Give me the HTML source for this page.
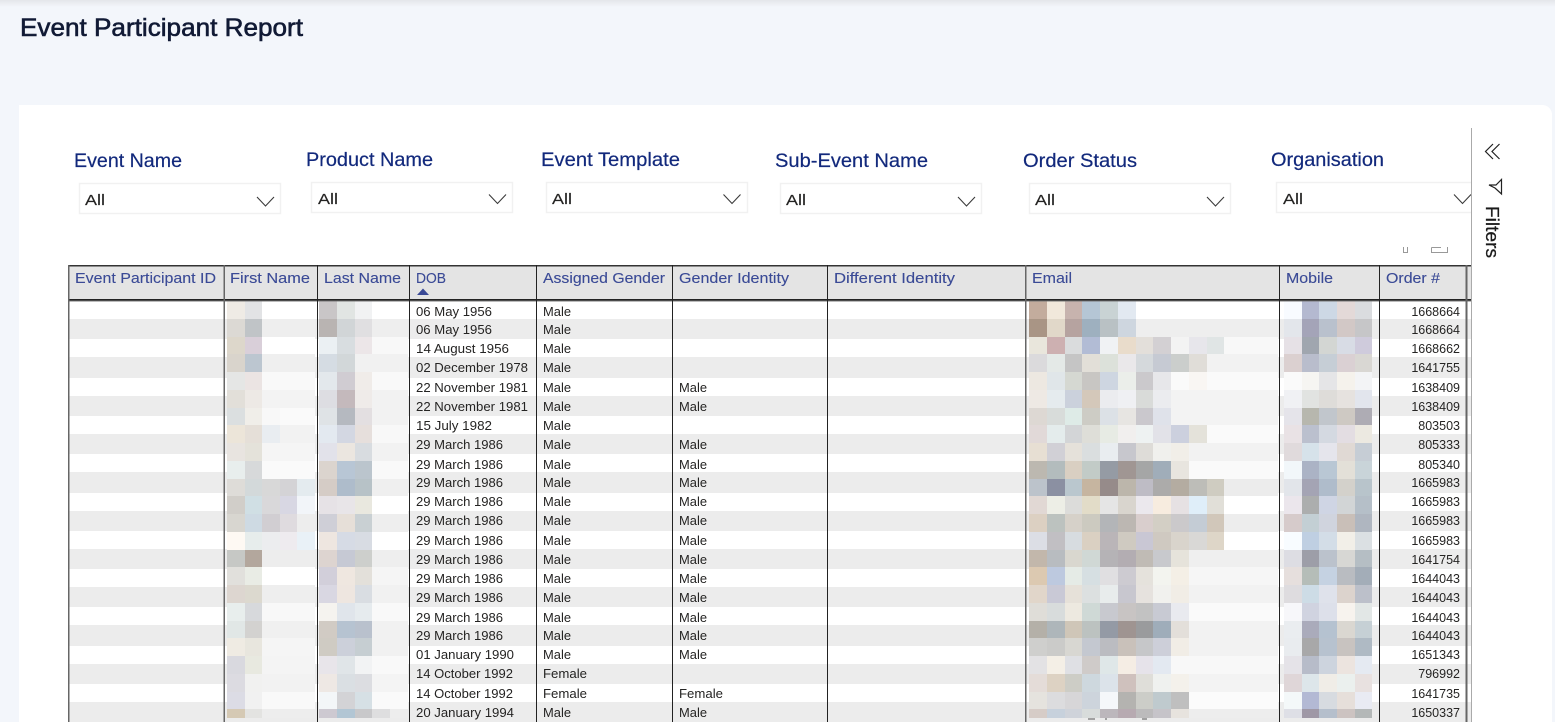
<!DOCTYPE html>
<html><head><meta charset="utf-8"><title>Event Participant Report</title>
<style>
html,body{margin:0;padding:0;width:1555px;height:722px;overflow:hidden;background:#f3f6fb}
svg{position:absolute;left:0;top:0}
text{font-family:"Liberation Sans",sans-serif}
.m{position:absolute;top:301px;height:417px;overflow:hidden;display:grid;grid-auto-rows:17.75px}
.f{left:227px;grid-template-columns:repeat(5,17.6px)}
.l{left:319px;grid-template-columns:repeat(5,17.8px)}
.e{left:1029px;grid-template-columns:repeat(14,17.75px)}
.p{left:1284px;grid-template-columns:repeat(5,17.7px)}
.s3{grid-column:span 3}.s4{grid-column:span 4}.s5{grid-column:span 5}.s6{grid-column:span 6}.s8{grid-column:span 8}
.la{font-size:19.5px;fill:#12297c;stroke:#12297c;stroke-width:.2px}
.al{font-size:15px;fill:#252423;stroke:#252423;stroke-width:.15px}
.h{font-size:15px;fill:#3a4a96;stroke:#3a4a96;stroke-width:.12px}
.d{font-size:12.5px;fill:#252423}
.o{font-size:12.5px;fill:#252423;text-anchor:end}
</style></head><body>
<svg width="1555" height="722" viewBox="0 0 1555 722">
<defs><linearGradient id="t" x1="0" y1="0" x2="0" y2="1"><stop offset="0" stop-color="#e4e6ea"/><stop offset="1" stop-color="#f3f6fb"/></linearGradient></defs>
<rect width="1555" height="722" fill="#f3f6fb"/>
<rect width="1555" height="7" fill="url(#t)"/>
<path d="M19 105H1542a10 10 0 0 1 10 10V722H19Z" fill="#fff"/>
<g fill="#ececec">
<rect x="69" y="319" width="1402" height="20"/><rect x="69" y="357" width="1402" height="21"/><rect x="69" y="396" width="1402" height="20"/><rect x="69" y="434" width="1402" height="20"/><rect x="69" y="472" width="1402" height="21"/><rect x="69" y="511" width="1402" height="20"/><rect x="69" y="549" width="1402" height="20"/><rect x="69" y="587" width="1402" height="20"/><rect x="69" y="625" width="1402" height="21"/><rect x="69" y="664" width="1402" height="20"/><rect x="69" y="702" width="1402" height="20"/>
</g>
</svg>
<div class="m f">
<i style=background:#efebe5></i><i style=background:#e2e3e5></i><i style=background:#fff></i><i style=background:#fff></i><i style=background:#fff></i>
<i style=background:#dcd9d4></i><i style=background:#c0c4c7></i><i style=background:#eee></i><i style=background:#eee></i><i style=background:#eee></i>
<i style=background:#ddd7cb></i><i style=background:#d9cfd9></i><i style=background:#fff></i><i style=background:#fff></i><i style=background:#fff></i>
<i style=background:#d9d4cc></i><i style=background:#bcc6d0></i><i style=background:#efefef></i><i style=background:#efefef></i><i style=background:#efefef></i>
<i style=background:#e5e6e5></i><i style=background:#ebe4e3></i><i style=background:#f9f9f9></i><i style=background:#f9f9f9></i><i style=background:#f9f9f9></i>
<i style=background:#e2dfd9></i><i style=background:#ede9e5></i><i style=background:#f3f3f3></i><i style=background:#f3f3f3></i><i style=background:#f3f3f3></i>
<i style=background:#dbdfe0></i><i style=background:#f0eee9></i><i style=background:#f8f8f8></i><i style=background:#fafafa></i><i style=background:#fafafa></i>
<i style=background:#ece5d9></i><i style=background:#e5dfd8></i><i style=background:#e9edf1></i><i style=background:#f2f2f2></i><i style=background:#f2f2f2></i>
<i style=background:#e8e4e0></i><i style=background:#e4e2da></i><i style=background:#f5f5f5></i><i style=background:#f5f5f5></i><i style=background:#f5f5f5></i>
<i style=background:#e8eeed></i><i style=background:#d7d9da></i><i style=background:#fafafa></i><i style=background:#fafafa></i><i style=background:#fafafa></i>
<i style=background:#dedcd8></i><i style=background:#d3d9da></i><i style=background:#d8d8d8></i><i style=background:#d4d3d6></i><i style=background:#e4ebef></i>
<i style=background:#d1cec9></i><i style=background:#d0dfe4></i><i style=background:#d9d8da></i><i style=background:#d8d7e3></i><i style=background:#f2f5f9></i>
<i style=background:#d8d6d0></i><i style=background:#cedae3></i><i style=background:#d1ced2></i><i style=background:#dfdbdf></i><i style=background:#ededed></i>
<i style=background:#fef9f3></i><i style=background:#e7edec></i><i style=background:#ecedef></i><i style=background:#eeebef></i><i style=background:#e9f1f7></i>
<i style=background:#c6c8c5></i><i style=background:#b3a79d></i><i style=background:#ededed></i><i style=background:#ededed></i><i style=background:#ededed></i>
<i style=background:#e1e0dc></i><i style=background:#e9ece5></i><i style=background:#fff></i><i style=background:#fff></i><i style=background:#fff></i>
<i style=background:#ddd6d0></i><i style=background:#dcd9cf></i><i style=background:#eee></i><i style=background:#eee></i><i style=background:#eee></i>
<i style=background:#e8eeed></i><i style=background:#d7d9dc></i><i style=background:#f8f8f8></i><i style=background:#f8f8f8></i><i style=background:#f8f8f8></i>
<i style=background:#e1e7e6></i><i style=background:#d3d2d0></i><i style=background:#f0f0f0></i><i style=background:#f0f0f0></i><i style=background:#f0f0f0></i>
<i style=background:#efebe3></i><i style=background:#e8e6de></i><i style=background:#f5f5f5></i><i style=background:#f5f5f5></i><i style=background:#f5f5f5></i>
<i style=background:#d9d9df></i><i style=background:#e8e9e0></i><i style=background:#f4f4f4></i><i style=background:#f4f4f4></i><i style=background:#f4f4f4></i>
<i style=background:#dcdbe1></i><i style=background:#f1f1f0></i><i style=background:#f2f2f2></i><i style=background:#f2f2f2></i><i style=background:#f2f2f2></i>
<i style=background:#dcdce5></i><i style=background:#f1f1f1></i><i style=background:#f9f9f9></i><i style=background:#f9f9f9></i><i style=background:#f9f9f9></i>
<i style=background:#d5c9b4></i><i style=background:#e3e3e1></i><i style=background:#ededed></i><i style=background:#ededed></i><i style=background:#ededed></i>
</div>
<div class="m l">
<i style=background:#c9c6c7></i><i style=background:#e1e5e3></i><i style=background:#f1f2f3></i><i style=background:#fff></i><i style=background:#fff></i>
<i style=background:#b9b4b2></i><i style=background:#d1d5d7></i><i style=background:#e0dfe1></i><i style=background:#eee></i><i style=background:#eee></i>
<i style=background:#ebf0f3></i><i style=background:#d8dde0></i><i style=background:#ece6e8></i><i style=background:#f8f8f8></i><i style=background:#f8f8f8></i>
<i style=background:#d5dce3></i><i style=background:#d2d7d9></i><i style=background:#f1f1f1></i><i style=background:#f1f1f1></i><i style=background:#f1f1f1></i>
<i style=background:#e3e8ec></i><i style=background:#d0ccd2></i><i style=background:#f0ece9></i><i style=background:#f9f9f9></i><i style=background:#f9f9f9></i>
<i style=background:#dddde2></i><i style=background:#c4b9bc></i><i style=background:#efebe9></i><i style=background:#f2f2f2></i><i style=background:#f2f2f2></i>
<i style=background:#dfe3e6></i><i style=background:#b5b9c0></i><i style=background:#e3dfe1></i><i style=background:#f2f2f2></i><i style=background:#f2f2f2></i>
<i style=background:#e3e9f0></i><i style=background:#d3d7e2></i><i style=background:#e6dfdc></i><i style=background:#f8f8f8></i><i style=background:#f8f8f8></i>
<i style=background:#e2e2ea></i><i style=background:#ebe6e0></i><i style=background:#d8dce0></i><i style=background:#f2f2f2></i><i style=background:#f2f2f2></i>
<i style=background:#dbd4ce></i><i style=background:#b8c6d5></i><i style=background:#bbc5cd></i><i style=background:#f9f9f9></i><i style=background:#f9f9f9></i>
<i style=background:#d5ccc6></i><i style=background:#aebccb></i><i style=background:#b7c2c7></i><i style=background:#efefef></i><i style=background:#efefef></i>
<i style=background:#e6e2e6></i><i style=background:#e8e5e8></i><i style=background:#e9e8df></i><i style=background:#fff></i><i style=background:#fff></i>
<i style=background:#cfcfd7></i><i style=background:#e6dfd8></i><i style=background:#c9d0d3></i><i style=background:#eee></i><i style=background:#eee></i>
<i style=background:#eee6e0></i><i style=background:#d6dbe5></i><i style=background:#d8dce3></i><i style=background:#fff></i><i style=background:#fff></i>
<i style=background:#ddd4d0></i><i style=background:#c6c9d4></i><i style=background:#cdcfcc></i><i style=background:#eee></i><i style=background:#eee></i>
<i style=background:#d2cfda></i><i style=background:#efe7e0></i><i style=background:#e3e0da></i><i style=background:#f5f5f5></i><i style=background:#f5f5f5></i>
<i style=background:#d9d7e2></i><i style=background:#eee6e0></i><i style=background:#d9dde2></i><i style=background:#f1f1f1></i><i style=background:#f1f1f1></i>
<i style=background:#f5f3ef></i><i style=background:#e0e5eb></i><i style=background:#e6ebee></i><i style=background:#f9f9f9></i><i style=background:#f9f9f9></i>
<i style=background:#d1cbc4></i><i style=background:#b6c3d1></i><i style=background:#b9c1cd></i><i style=background:#f1f1f1></i><i style=background:#f1f1f1></i>
<i style=background:#cfcbc3></i><i style=background:#ccd0da></i><i style=background:#c6ced2></i><i style=background:#f1f1f1></i><i style=background:#f1f1f1></i>
<i style=background:#e8e5ea></i><i style=background:#e0e5e8></i><i style=background:#f2f3f4></i><i style=background:#f9f9f9></i><i style=background:#f9f9f9></i>
<i style=background:#eee8e4></i><i style=background:#dadfe3></i><i style=background:#dcdde1></i><i style=background:#f4f4f4></i><i style=background:#f4f4f4></i>
<i style=background:#f3f6f8></i><i style=background:#d3d3d6></i><i style=background:#d6e0e5></i><i style=background:#fafafa></i><i style=background:#fafafa></i>
<i style=background:#cdc9d1></i><i style=background:#b2c6d4></i><i style=background:#c8c8ca></i><i style=background:#dededf></i><i style=background:#ededed></i>
</div>
<div class="m e">
<i style=background:#c3ac9d></i><i style=background:#f1e8db></i><i style=background:#c7b3ae></i><i style=background:#b5c6d5></i><i style=background:#c9d3d4></i><i style=background:#e2e9f1></i><i class=s8 style=background:#fff></i>
<i style=background:#a99585></i><i style=background:#e1d8c9></i><i style=background:#b6a3a0></i><i style=background:#9eb0bf></i><i style=background:#b9c1c4></i><i style=background:#ced6df></i><i class=s8 style=background:#eee></i>
<i style=background:#e9e6dc></i><i style=background:#cdb0b1></i><i style=background:#dadcdd></i><i style=background:#b2bcd5></i><i style=background:#f0f2f4></i><i style=background:#e9dccb></i><i style=background:#e3dfda></i><i style=background:#d3d0d3></i><i style=background:#f3f3f3></i><i style=background:#e7e6eb></i><i style=background:#e0e5e5></i><i class=s3 style=background:#f8f8f8></i>
<i style=background:#dbdadc></i><i style=background:#e4e9e7></i><i style=background:#c5c5c5></i><i style=background:#e2dfd8></i><i style=background:#dce1da></i><i style=background:#eae8ea></i><i style=background:#d5d9dc></i><i style=background:#c6cad3></i><i style=background:#cbcecc></i><i style=background:#e0ddd8></i><i class=s4 style=background:#f2f2f2></i>
<i style=background:#ede8e1></i><i style=background:#e0e6e9></i><i style=background:#d5d8d2></i><i style=background:#c8c6c3></i><i style=background:#ced6e1></i><i style=background:#ebeeea></i><i style=background:#cbc9cc></i><i style=background:#e7e7ea></i><i style=background:#fafafa></i><i style=background:#f9f6f3></i><i class=s4 style=background:#fafafa></i>
<i style=background:#eee9e4></i><i style=background:#e5ebee></i><i style=background:#cbd1dc></i><i style=background:#d4c8ba></i><i style=background:#ebecef></i><i style=background:#eff0f3></i><i style=background:#d9dbd9></i><i style=background:#ebecef></i><i class=s6 style=background:#f3f3f3></i>
<i style=background:#ddd8d3></i><i style=background:#d8dcda></i><i style=background:#deebe7></i><i style=background:#cdccc5></i><i style=background:#dce1e6></i><i style=background:#e7e5e2></i><i style=background:#cac8cd></i><i style=background:#dfe2ea></i><i class=s6 style=background:#f3f3f3></i>
<i style=background:#e1d9d8></i><i style=background:#e4ecec></i><i style=background:#d3d5d7></i><i style=background:#deded8></i><i style=background:#e7ebe4></i><i style=background:#f1efee></i><i style=background:#eef2f2></i><i style=background:#e2e2e8></i><i style=background:#ccd0de></i><i style=background:#e4e2da></i><i class=s4 style=background:#fafafa></i>
<i style=background:#e7dfd3></i><i style=background:#d1d0d6></i><i style=background:#e5e1da></i><i style=background:#dadedf></i><i style=background:#e9edf0></i><i style=background:#c7c7cd></i><i style=background:#dedcd8></i><i style=background:#f0f0ed></i><i style=background:#f1eee8></i><i class=s5 style=background:#f2f2f2></i>
<i style=background:#bcb8b0></i><i style=background:#b3bcbd></i><i style=background:#d9cfc2></i><i style=background:#c2cbc7></i><i style=background:#959ba4></i><i style=background:#a09693></i><i style=background:#a5a6a6></i><i style=background:#a0adb9></i><i style=background:#e8e5df></i><i class=s5 style=background:#fafafa></i>
<i style=background:#bcc3cb></i><i style=background:#8b90a2></i><i style=background:#bac7ce></i><i style=background:#c6b5a0></i><i style=background:#968b8a></i><i style=background:#bcb6ab></i><i style=background:#bebcc5></i><i style=background:#acabaa></i><i style=background:#b4aca1></i><i style=background:#bdbdb8></i><i style=background:#cfccc1></i><i class=s3 style=background:#ececec></i>
<i style=background:#e1d8d4></i><i style=background:#edeee6></i><i style=background:#dcdcda></i><i style=background:#e2dcc8></i><i style=background:#e5e5e5></i><i style=background:#d9d5ce></i><i style=background:#ebe8ed></i><i style=background:#f7ecdf></i><i style=background:#e6e1e3></i><i style=background:#dfeef9></i><i style=background:#e1dfd8></i><i class=s3 style=background:#fff></i>
<i style=background:#dcd0c2></i><i style=background:#bcc2bf></i><i style=background:#d6d1c9></i><i style=background:#cccac0></i><i style=background:#b3b5b8></i><i style=background:#bcb7b2></i><i style=background:#d9cecd></i><i style=background:#d3cfc5></i><i style=background:#cbc9cb></i><i style=background:#c4ccd5></i><i style=background:#d1c7ba></i><i class=s3 style=background:#ededed></i>
<i style=background:#dcdee5></i><i style=background:#c1bfc3></i><i style=background:#d7dce0></i><i style=background:#dad0c2></i><i style=background:#bab5b8></i><i style=background:#cfcac1></i><i style=background:#c9c7d4></i><i style=background:#cfc9c1></i><i style=background:#d9d4cc></i><i style=background:#d9d8d6></i><i style=background:#ded6c8></i><i class=s3 style=background:#fff></i>
<i style=background:#c2b7ab></i><i style=background:#b8bcc0></i><i style=background:#d9d7cf></i><i style=background:#d0d8d5></i><i style=background:#b5b3b6></i><i style=background:#b3adb2></i><i style=background:#c0bbb5></i><i style=background:#c8c9cd></i><i style=background:#e6e3db></i><i class=s5 style=background:#efefef></i>
<i style=background:#dcc9b1></i><i style=background:#bdc9df></i><i style=background:#e5ebe6></i><i style=background:#d6dfe2></i><i style=background:#e0dfe1></i><i style=background:#cdcbd1></i><i style=background:#e5e2dc></i><i style=background:#f3f4ef></i><i style=background:#f4efe6></i><i class=s5 style=background:#f6f6f6></i>
<i style=background:#e1d6ca></i><i style=background:#c9c9d6></i><i style=background:#e6e1d9></i><i style=background:#dce0e0></i><i style=background:#e8ecec></i><i style=background:#c8c7cf></i><i style=background:#e6e2de></i><i style=background:#f1f1ee></i><i style=background:#f1ede6></i><i class=s5 style=background:#f2f2f2></i>
<i style=background:#dfddd8></i><i style=background:#d8dcdc></i><i style=background:#ede9e0></i><i style=background:#cfd9d6></i><i style=background:#c8c9cf></i><i style=background:#c8c4c3></i><i style=background:#c2c2c2></i><i style=background:#c8cad3></i><i style=background:#e9eaef></i><i class=s5 style=background:#fafafa></i>
<i style=background:#b4b0a8></i><i style=background:#aeb6ba></i><i style=background:#cfc6b8></i><i style=background:#bcc2c0></i><i style=background:#949aa5></i><i style=background:#9f9491></i><i style=background:#9a9b9d></i><i style=background:#9fadba></i><i style=background:#e3dfda></i><i class=s5 style=background:#f2f2f2></i>
<i style=background:#cfcfcd></i><i style=background:#cbcbc9></i><i style=background:#d8d7d2></i><i style=background:#c4c8d0></i><i style=background:#bbbcc1></i><i style=background:#c9c1ba></i><i style=background:#c6c7c9></i><i style=background:#cdcfd9></i><i style=background:#f1ede6></i><i class=s5 style=background:#f2f2f2></i>
<i style=background:#e3e2e4></i><i style=background:#f4efe6></i><i style=background:#dfe0e4></i><i style=background:#cfcbc9></i><i style=background:#dfe7e8></i><i style=background:#f5ede4></i><i style=background:#e6e3ea></i><i style=background:#e3e9f1></i><i class=s6 style=background:#f8f8f8></i>
<i style=background:#e4dcd8></i><i style=background:#ddd2c3></i><i style=background:#cdcdc6></i><i style=background:#ced8de></i><i style=background:#dce3ea></i><i style=background:#cfc1bd></i><i style=background:#dfded9></i><i style=background:#eff1ef></i><i style=background:#f4f1eb></i><i class=s5 style=background:#f3f3f3></i>
<i style=background:#e5e3de></i><i style=background:#dcdcde></i><i style=background:#d7d6d8></i><i style=background:#cdd4dc></i><i style=background:#f5f7fa></i><i style=background:#b4b3b0></i><i style=background:#cccdc8></i><i style=background:#bfcace></i><i style=background:#bfbfbf></i><i class=s5 style=background:#fbfbfb></i>
<i style=background:#d6ccc7></i><i style=background:#c7d1dc></i><i style=background:#cfd3da></i><i style=background:#d8dcdb></i><i style=background:#bcb7bc></i><i style=background:#b7aab1></i><i style=background:#bcbbbc></i><i style=background:#c6c4c9></i><i style=background:#e7e3de></i><i class=s5 style=background:#ededed></i>
</div>
<div class="m p">
<i style=background:#f8fbff></i><i style=background:#b4b9d0></i><i style=background:#cdd8e5></i><i style=background:#e3d9d8></i><i style=background:#dadcdf></i>
<i style=background:#e3e6eb></i><i style=background:#a4a4b8></i><i style=background:#b9c1cd></i><i style=background:#d2c8c6></i><i style=background:#c6c6c8></i>
<i style=background:#e6e1e6></i><i style=background:#a0a6af></i><i style=background:#d3d6d3></i><i style=background:#d8dce5></i><i style=background:#cfcbdc></i>
<i style=background:#dbd0d0></i><i style=background:#b9bdcc></i><i style=background:#c6ced6></i><i style=background:#dad0d3></i><i style=background:#d9d7d3></i>
<i style=background:#fafafa></i><i style=background:#f6f5f2></i><i style=background:#e5e5e7></i><i style=background:#f5f2ec></i><i style=background:#f3f4f6></i>
<i style=background:#f0f1f4></i><i style=background:#e1e3e1></i><i style=background:#dedcd9></i><i style=background:#e6e2df></i><i style=background:#e2e5ed></i>
<i style=background:#e5e4ea></i><i style=background:#b7b7ae></i><i style=background:#c1c6cc></i><i style=background:#cec9c3></i><i style=background:#aeacb4></i>
<i style=background:#e9e2e5></i><i style=background:#bbc0ce></i><i style=background:#d4d9e1></i><i style=background:#e3dde2></i><i style=background:#ece9e1></i>
<i style=background:#e0dadc></i><i style=background:#d6e2ea></i><i style=background:#e5e5ec></i><i style=background:#e0d9d4></i><i style=background:#c6cdd5></i>
<i style=background:#f2f7fa></i><i style=background:#abb3c5></i><i style=background:#b9c7d4></i><i style=background:#e3e0d8></i><i style=background:#c9d4d9></i>
<i style=background:#e2e5ea></i><i style=background:#a4a4b4></i><i style=background:#afbccb></i><i style=background:#d3d1cb></i><i style=background:#b8c4cb></i>
<i style=background:#ebe6ec></i><i style=background:#acaeae></i><i style=background:#cfd5e4></i><i style=background:#d2d5d6></i><i style=background:#b5bfc8></i>
<i style=background:#d6cbcb></i><i style=background:#c3cfd4></i><i style=background:#d0d4de></i><i style=background:#c9bfb8></i><i style=background:#afb6c0></i>
<i style=background:#f8fcff></i><i style=background:#bfcfe2></i><i style=background:#d3dde7></i><i style=background:#f2efe8></i><i style=background:#dbe0e3></i>
<i style=background:#dddde3></i><i style=background:#9d9ea8></i><i style=background:#bbc2cc></i><i style=background:#d7d7d4></i><i style=background:#b5bec4></i>
<i style=background:#e6dfdd></i><i style=background:#b5bdb8></i><i style=background:#c5d2e2></i><i style=background:#b9bcc1></i><i style=background:#a3adb8></i>
<i style=background:#dedcdf></i><i style=background:#cddce6></i><i style=background:#dfe2eb></i><i style=background:#dcd3cd></i><i style=background:#bcc0ca></i>
<i style=background:#f7f7fa></i><i style=background:#d0d3e0></i><i style=background:#dde0ea></i><i style=background:#f7f3ee></i><i style=background:#e2e7e6></i>
<i style=background:#eaedf0></i><i style=background:#aaabbb></i><i style=background:#b5c2d0></i><i style=background:#dad7d1></i><i style=background:#c6d0d5></i>
<i style=background:#e9ecef></i><i style=background:#a8a8a9></i><i style=background:#b7c2cf></i><i style=background:#c8c3c0></i><i style=background:#afbac4></i>
<i style=background:#e5e3e8></i><i style=background:#b7bcc9></i><i style=background:#cdd4de></i><i style=background:#ece4df></i><i style=background:#e5eaf2></i>
<i style=background:#dfd6d8></i><i style=background:#dde6ea></i><i style=background:#f0ede7></i><i style=background:#ebf0ee></i><i style=background:#e8e1e0></i>
<i style=background:#f4f8f9></i><i style=background:#b3b9d4></i><i style=background:#d7dbe0></i><i style=background:#e6dfda></i><i style=background:#e9ebf3></i>
<i style=background:#dedfe6></i><i style=background:#9f98a6></i><i style=background:#b5bfcc></i><i style=background:#ccc3c1></i><i style=background:#b4b8b8></i>
</div>
<svg width="1555" height="722" viewBox="0 0 1555 722">
<text x="20" y="36" font-size="25" fill="#111a35" stroke="#111a35" stroke-width=".6" textLength="283" lengthAdjust="spacingAndGlyphs">Event Participant Report</text>
<g class="labels">
<text class="la" x="74" y="167" textLength="108" lengthAdjust="spacingAndGlyphs">Event Name</text>
<text class="la" x="306" y="166" textLength="127" lengthAdjust="spacingAndGlyphs">Product Name</text>
<text class="la" x="541" y="166" textLength="139" lengthAdjust="spacingAndGlyphs">Event Template</text>
<text class="la" x="775" y="167" textLength="153" lengthAdjust="spacingAndGlyphs">Sub-Event Name</text>
<text class="la" x="1023" y="167" textLength="114" lengthAdjust="spacingAndGlyphs">Order Status</text>
<text class="la" x="1271" y="166" textLength="113" lengthAdjust="spacingAndGlyphs">Organisation</text>
</g>
<g fill="#fff" stroke="#f1f1f1" stroke-width="1.5">
<rect x="79.5" y="183.5" width="201" height="30"/><rect x="311.5" y="182.5" width="201" height="30"/><rect x="546.5" y="182.5" width="201" height="30"/><rect x="780.5" y="183.5" width="201" height="30"/><rect x="1029.5" y="183.5" width="201" height="30"/><rect x="1276.5" y="182.5" width="201" height="30"/>
</g>
<text class="al" x="85" y="205" textLength="20" lengthAdjust="spacingAndGlyphs">All</text>
<text class="al" x="318" y="204" textLength="20" lengthAdjust="spacingAndGlyphs">All</text>
<text class="al" x="552" y="204" textLength="20" lengthAdjust="spacingAndGlyphs">All</text>
<text class="al" x="786" y="205" textLength="20" lengthAdjust="spacingAndGlyphs">All</text>
<text class="al" x="1035" y="205" textLength="20" lengthAdjust="spacingAndGlyphs">All</text>
<text class="al" x="1283" y="204" textLength="20" lengthAdjust="spacingAndGlyphs">All</text>
<g fill="none" stroke="#3a3a3a" stroke-width="1.1">
<path d="M257 197l8.5 9 8.5-9"/><path d="M489 194.5l8.5 9 8.5-9"/><path d="M723.5 194.5l8.5 9 8.5-9"/><path d="M958 197l8.5 9 8.5-9"/><path d="M1207 197l8.5 9 8.5-9"/><path d="M1454 194.5l8.5 9 8.5-9"/>
</g>
<path d="M1403.5 247V252.5H1407.5V247M1431.5 247.5H1441M1431.5 247.5V252.5H1447.5V247" fill="none" stroke="#999" stroke-width="1"/>
<rect x="69" y="266" width="1402" height="34" fill="#e4e4e4"/>
<rect x="68" y="265" width="1403" height="1.5" fill="#333"/>
<rect x="68" y="299" width="1403" height="1.5" fill="#222"/>
<rect x="68" y="300.5" width="1403" height="1" fill="#777"/>
<path d="M417 295L423 288.5 429 295Z" fill="#3a4a96"/>
<text class="h" x="75" y="283" textLength="141" lengthAdjust="spacingAndGlyphs">Event Participant ID</text>
<text class="h" x="230" y="283" textLength="80" lengthAdjust="spacingAndGlyphs">First Name</text>
<text class="h" x="324" y="283" textLength="77" lengthAdjust="spacingAndGlyphs">Last Name</text>
<text class="h" x="416" y="283" textLength="30" lengthAdjust="spacingAndGlyphs">DOB</text>
<text class="h" x="543" y="283" textLength="122" lengthAdjust="spacingAndGlyphs">Assigned Gender</text>
<text class="h" x="679" y="283" textLength="110" lengthAdjust="spacingAndGlyphs">Gender Identity</text>
<text class="h" x="834" y="283" textLength="121" lengthAdjust="spacingAndGlyphs">Different Identity</text>
<text class="h" x="1032" y="283" textLength="40" lengthAdjust="spacingAndGlyphs">Email</text>
<text class="h" x="1286" y="283" textLength="47" lengthAdjust="spacingAndGlyphs">Mobile</text>
<text class="h" x="1386" y="283" textLength="54" lengthAdjust="spacingAndGlyphs">Order #</text>
<g fill="#222">
<rect x="317" y="265" width="1" height="457"/><rect x="409" y="265" width="1" height="457"/><rect x="536" y="265" width="1" height="457"/><rect x="672" y="265" width="1" height="457"/><rect x="827" y="265" width="1" height="457"/><rect x="1279" y="265" width="1" height="457"/><rect x="1379" y="265" width="1" height="457"/>
</g>
<g fill="#666">
<rect x="68" y="265" width="1.5" height="457"/><rect x="223.5" y="265" width="1.5" height="457"/><rect x="1025" y="265" width="1.5" height="457"/><rect x="1465.5" y="265" width="2" height="457"/>
</g>
<g class="d">
<text x="416" y="316" textLength="76" lengthAdjust="spacingAndGlyphs">06 May 1956</text>
<text x="416" y="334" textLength="76" lengthAdjust="spacingAndGlyphs">06 May 1956</text>
<text x="416" y="353" textLength="93" lengthAdjust="spacingAndGlyphs">14 August 1956</text>
<text x="416" y="372" textLength="112" lengthAdjust="spacingAndGlyphs">02 December 1978</text>
<text x="416" y="392" textLength="112" lengthAdjust="spacingAndGlyphs">22 November 1981</text>
<text x="416" y="411" textLength="112" lengthAdjust="spacingAndGlyphs">22 November 1981</text>
<text x="416" y="430" textLength="76" lengthAdjust="spacingAndGlyphs">15 July 1982</text>
<text x="416" y="449" textLength="87" lengthAdjust="spacingAndGlyphs">29 March 1986</text>
<text x="416" y="469" textLength="87" lengthAdjust="spacingAndGlyphs">29 March 1986</text>
<text x="416" y="487" textLength="87" lengthAdjust="spacingAndGlyphs">29 March 1986</text>
<text x="416" y="506" textLength="87" lengthAdjust="spacingAndGlyphs">29 March 1986</text>
<text x="416" y="525" textLength="87" lengthAdjust="spacingAndGlyphs">29 March 1986</text>
<text x="416" y="545" textLength="87" lengthAdjust="spacingAndGlyphs">29 March 1986</text>
<text x="416" y="564" textLength="87" lengthAdjust="spacingAndGlyphs">29 March 1986</text>
<text x="416" y="583" textLength="87" lengthAdjust="spacingAndGlyphs">29 March 1986</text>
<text x="416" y="602" textLength="87" lengthAdjust="spacingAndGlyphs">29 March 1986</text>
<text x="416" y="622" textLength="87" lengthAdjust="spacingAndGlyphs">29 March 1986</text>
<text x="416" y="640" textLength="87" lengthAdjust="spacingAndGlyphs">29 March 1986</text>
<text x="416" y="659" textLength="98" lengthAdjust="spacingAndGlyphs">01 January 1990</text>
<text x="416" y="678" textLength="97" lengthAdjust="spacingAndGlyphs">14 October 1992</text>
<text x="416" y="698" textLength="97" lengthAdjust="spacingAndGlyphs">14 October 1992</text>
<text x="416" y="717" textLength="98" lengthAdjust="spacingAndGlyphs">20 January 1994</text>
<text x="543" y="316" textLength="28" lengthAdjust="spacingAndGlyphs">Male</text>
<text x="543" y="334" textLength="28" lengthAdjust="spacingAndGlyphs">Male</text>
<text x="543" y="353" textLength="28" lengthAdjust="spacingAndGlyphs">Male</text>
<text x="543" y="372" textLength="28" lengthAdjust="spacingAndGlyphs">Male</text>
<text x="543" y="392" textLength="28" lengthAdjust="spacingAndGlyphs">Male</text>
<text x="543" y="411" textLength="28" lengthAdjust="spacingAndGlyphs">Male</text>
<text x="543" y="430" textLength="28" lengthAdjust="spacingAndGlyphs">Male</text>
<text x="543" y="449" textLength="28" lengthAdjust="spacingAndGlyphs">Male</text>
<text x="543" y="469" textLength="28" lengthAdjust="spacingAndGlyphs">Male</text>
<text x="543" y="487" textLength="28" lengthAdjust="spacingAndGlyphs">Male</text>
<text x="543" y="506" textLength="28" lengthAdjust="spacingAndGlyphs">Male</text>
<text x="543" y="525" textLength="28" lengthAdjust="spacingAndGlyphs">Male</text>
<text x="543" y="545" textLength="28" lengthAdjust="spacingAndGlyphs">Male</text>
<text x="543" y="564" textLength="28" lengthAdjust="spacingAndGlyphs">Male</text>
<text x="543" y="583" textLength="28" lengthAdjust="spacingAndGlyphs">Male</text>
<text x="543" y="602" textLength="28" lengthAdjust="spacingAndGlyphs">Male</text>
<text x="543" y="622" textLength="28" lengthAdjust="spacingAndGlyphs">Male</text>
<text x="543" y="640" textLength="28" lengthAdjust="spacingAndGlyphs">Male</text>
<text x="543" y="659" textLength="28" lengthAdjust="spacingAndGlyphs">Male</text>
<text x="543" y="678" textLength="44" lengthAdjust="spacingAndGlyphs">Female</text>
<text x="543" y="698" textLength="44" lengthAdjust="spacingAndGlyphs">Female</text>
<text x="543" y="717" textLength="28" lengthAdjust="spacingAndGlyphs">Male</text>
<text x="679" y="392" textLength="28" lengthAdjust="spacingAndGlyphs">Male</text>
<text x="679" y="411" textLength="28" lengthAdjust="spacingAndGlyphs">Male</text>
<text x="679" y="449" textLength="28" lengthAdjust="spacingAndGlyphs">Male</text>
<text x="679" y="469" textLength="28" lengthAdjust="spacingAndGlyphs">Male</text>
<text x="679" y="487" textLength="28" lengthAdjust="spacingAndGlyphs">Male</text>
<text x="679" y="506" textLength="28" lengthAdjust="spacingAndGlyphs">Male</text>
<text x="679" y="525" textLength="28" lengthAdjust="spacingAndGlyphs">Male</text>
<text x="679" y="545" textLength="28" lengthAdjust="spacingAndGlyphs">Male</text>
<text x="679" y="564" textLength="28" lengthAdjust="spacingAndGlyphs">Male</text>
<text x="679" y="583" textLength="28" lengthAdjust="spacingAndGlyphs">Male</text>
<text x="679" y="602" textLength="28" lengthAdjust="spacingAndGlyphs">Male</text>
<text x="679" y="622" textLength="28" lengthAdjust="spacingAndGlyphs">Male</text>
<text x="679" y="640" textLength="28" lengthAdjust="spacingAndGlyphs">Male</text>
<text x="679" y="659" textLength="28" lengthAdjust="spacingAndGlyphs">Male</text>
<text x="679" y="698" textLength="44" lengthAdjust="spacingAndGlyphs">Female</text>
<text x="679" y="717" textLength="28" lengthAdjust="spacingAndGlyphs">Male</text>
</g>
<g class="o">
<text x="1460" y="316">1668664</text><text x="1460" y="334">1668664</text><text x="1460" y="353">1668662</text><text x="1460" y="372">1641755</text><text x="1460" y="392">1638409</text><text x="1460" y="411">1638409</text><text x="1460" y="430">803503</text><text x="1460" y="449">805333</text><text x="1460" y="469">805340</text><text x="1460" y="487">1665983</text><text x="1460" y="506">1665983</text><text x="1460" y="525">1665983</text><text x="1460" y="545">1665983</text><text x="1460" y="564">1641754</text><text x="1460" y="583">1644043</text><text x="1460" y="602">1644043</text><text x="1460" y="622">1644043</text><text x="1460" y="640">1644043</text><text x="1460" y="659">1651343</text><text x="1460" y="678">796992</text><text x="1460" y="698">1641735</text><text x="1460" y="717">1650337</text>
</g>
<path d="M1088 719h7M1105 719h2M1142 719h5" stroke="#888" stroke-width="1.5"/>
<path d="M1542 105a10 10 0 0 1 10 10V722H1472V105Z" fill="#fff"/>
<rect x="1471" y="128" width="1" height="594" fill="#aaa"/>
<path d="M1493 144L1485.5 151.5 1493 159M1499.5 144L1492 151.5 1499.5 159" fill="none" stroke="#222" stroke-width="1.2"/>
<path d="M1501.5 179.5V194L1495 188 1489 185H1496Z" fill="none" stroke="#222" stroke-width="1.2"/>
<text transform="translate(1486,206) rotate(90)" font-size="18" fill="#1a1a1a" stroke="#1a1a1a" stroke-width=".25" textLength="52" lengthAdjust="spacingAndGlyphs">Filters</text>
</svg>
</body></html>
